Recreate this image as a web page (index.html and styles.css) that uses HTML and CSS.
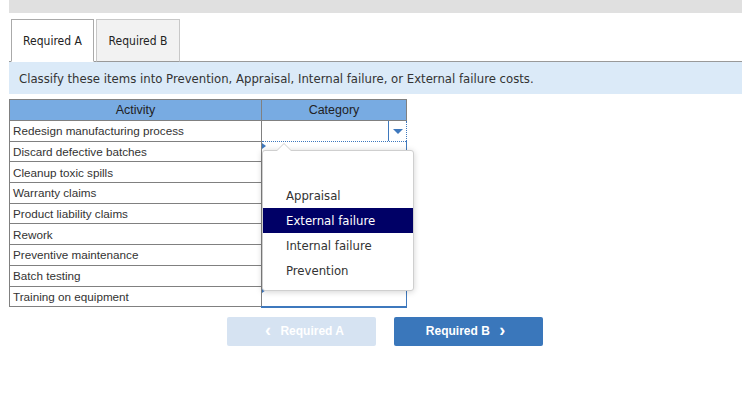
FILE: index.html
```html
<!DOCTYPE html>
<html lang="en">
<head>
  <meta charset="UTF-8">
  <title>Classify costs</title>
  <link rel="stylesheet" href="styles.css">
</head>
<body>
  <div class="top-bar"></div>

  <!-- Tabs -->
  <div class="tabs">
    <div class="tab active">Required A</div>
    <div class="tab">Required B</div>
  </div>

  <div class="instructions">Classify these items into Prevention, Appraisal, Internal failure, or External failure costs.</div>

  <div class="table-wrap">
    <table class="grid">
      <tr>
        <th class="col-activity">Activity</th>
        <th class="col-category">Category</th>
      </tr>
      <tr>
        <td>Redesign manufacturing process</td>
        <td class="cat open"><span class="caret-box"><span class="caret"></span></span></td>
      </tr>
      <tr><td>Discard defective batches</td><td class="cat first marked"></td></tr>
      <tr><td>Cleanup toxic spills</td><td class="cat"></td></tr>
      <tr><td>Warranty claims</td><td class="cat"></td></tr>
      <tr><td>Product liability claims</td><td class="cat"></td></tr>
      <tr><td>Rework</td><td class="cat"></td></tr>
      <tr><td>Preventive maintenance</td><td class="cat"></td></tr>
      <tr><td>Batch testing</td><td class="cat"></td></tr>
      <tr><td>Training on equipment</td><td class="cat last marked"></td></tr>
    </table>

    <!-- open dropdown list -->
    <ul class="dropdown">
      <li class="empty"></li>
      <li>Appraisal</li>
      <li class="selected">External failure</li>
      <li>Internal failure</li>
      <li>Prevention</li>
    </ul>
  </div>

  <div class="nav-buttons">
    <button class="nav-btn disabled"><span class="chev">&lsaquo;</span> Required A</button>
    <button class="nav-btn">Required B <span class="chev">&rsaquo;</span></button>
  </div>
</body>
</html>
```

FILE: styles.css
```css
* {
  margin: 0;
  padding: 0;
  box-sizing: border-box;
}

body {
  font-family: "DejaVu Sans Condensed", "DejaVu Sans", sans-serif;
  background-color: #fff;
  color: #333;
  padding-left: 9px;
}

.top-bar {
  height: 13px;
  background-color: #e0e0e0;
}

/* Tabs */
.tabs {
  display: flex;
  gap: 2px;
  margin-top: 6px;
  padding-left: 2px;
  border-bottom: 1px solid #999;
}

.tab {
  width: 84px;
  height: 43px;
  margin-bottom: -1px;
  border: 1px solid #c8c8c8;
  border-bottom: 1px solid #999;
  background-color: #f2f2f2;
  font-size: 12px;
  line-height: 43px;
  text-align: center;
  color: #222;
}

.tab.active {
  width: 83px;
  background-color: #fff;
  border-color: #aaa;
  border-bottom-color: #fff;
}

.instructions {
  height: 32px;
  line-height: 33px;
  padding-left: 10px;
  background-color: #dbeaf8;
  font-size: 13px;
  color: #333;
}

/* Table */
.table-wrap {
  position: relative;
  margin-top: 5px;
}

.grid {
  border-collapse: collapse;
  font-family: "Liberation Sans", Arial, sans-serif;
  font-size: 11.7px;
  color: #333;
}

.grid th {
  height: 21px;
  background-color: #78abe2;
  border: 1px solid #808080;
  font-weight: normal;
  font-size: 12.5px;
  color: #222;
}

.col-activity {
  width: 252px;
}

.col-category {
  width: 145px;
}

.grid td {
  height: 20.7px;
  padding: 0 3px;
  border: 1px solid #808080;
  white-space: nowrap;
}

.grid td.cat {
  position: relative;
  border-left: 1px solid #3e78bd;
  border-right: 1px solid #3e78bd;
  border-top: none;
  border-bottom: none;
}

.grid td.cat.open {
  border: 1px dotted #3e78bd;
}

.grid td.cat.last {
  border-bottom: 2px solid #3e78bd;
}

.grid td.cat.marked::before {
  content: "";
  position: absolute;
  left: 0;
  top: 1px;
  border-top: 3px solid transparent;
  border-bottom: 3px solid transparent;
  border-left: 4px solid #3e78bd;
}

.caret-box {
  position: absolute;
  right: 0;
  top: 0;
  bottom: 0;
  width: 18px;
  border-left: 1px solid #3e78bd;
}

.caret {
  position: absolute;
  left: 4px;
  top: 8px;
  border-left: 5px solid transparent;
  border-right: 5px solid transparent;
  border-top: 5px solid #3e78bd;
}

/* Dropdown popup */
.dropdown {
  position: absolute;
  left: 253px;
  top: 51px;
  width: 152px;
  padding: 7px 0;
  list-style: none;
  background-color: #fff;
  border: 1px solid #cfcfcf;
  border-radius: 3px;
  box-shadow: 0 1px 6px rgba(0, 0, 0, 0.18);
  font-size: 13px;
  color: #333;
}

.dropdown::before,
.dropdown::after {
  content: "";
  position: absolute;
  left: 13px;
  border-left: 8px solid transparent;
  border-right: 8px solid transparent;
}

.dropdown::before {
  top: -8px;
  border-bottom: 8px solid #cfcfcf;
}

.dropdown::after {
  top: -7px;
  border-bottom: 8px solid #fff;
}

.dropdown li {
  height: 25px;
  line-height: 25px;
  padding-left: 23px;
}

.dropdown li.selected {
  background-color: #000066;
  color: #fff;
}

/* Bottom buttons */
.nav-buttons {
  display: flex;
  gap: 18px;
  margin-top: 9px;
  padding-left: 218px;
}

.nav-btn {
  width: 149px;
  height: 29px;
  border: none;
  border-radius: 2px;
  background-color: #3a77bb;
  color: #fff;
  font-family: "Liberation Sans", Arial, sans-serif;
  font-size: 12px;
  font-weight: bold;
}

.nav-btn.disabled {
  background-color: #d6e3f2;
}

.chev {
  display: inline-block;
  font-size: 18px;
  line-height: 10px;
  margin: 0 6px;
  vertical-align: -1px;
}
```
